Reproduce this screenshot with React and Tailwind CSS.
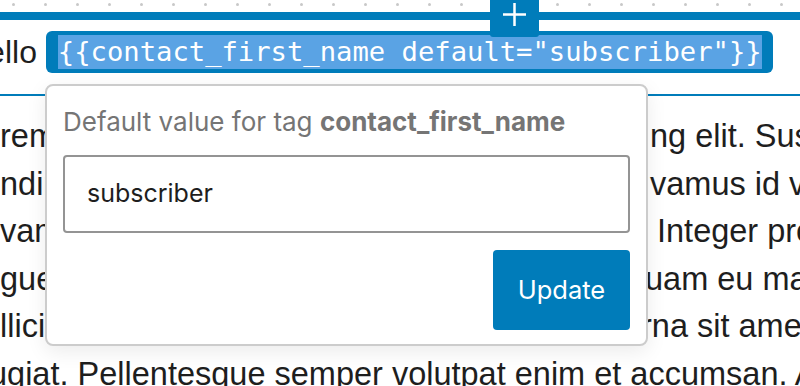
import React from "react";

const SANS = { fontFamily: '"Liberation Sans", Arial, sans-serif' };

const rows = [
  { left: "rem ipsum dolor sit amet", right: "ng elit. Suspendisse", rml: "ml-[0px]" },
  { left: "ndimentum lorem", right: "vamus id vel", rml: "ml-[0px]" },
  { left: "vamus lorem", right: "Integer pretium", rml: "ml-[7px]" },
  { left: "gue lorem", right: "uam eu magna", rml: "-ml-[5px]" },
  { left: "llicitudin lorem", right: "rna sit amet,", rml: "-ml-[9px]" },
];

export default function App() {
  const dots = Array.from({ length: 25 });
  return (
    <div
      className="relative w-[800px] h-[386px] overflow-hidden bg-white text-[#1e1e1e]"
      style={SANS}
    >
      {/* dotted guide */}
      <div className="flex h-[12px] gap-[29px] pl-[12px] pt-[3px]">
        {dots.map((_, i) => (
          <span key={i} className="block h-[3px] w-[3px] shrink-0 rounded-full bg-[#c8c8c8]" />
        ))}
      </div>
      {/* blue band */}
      <div className="h-[8px] bg-[#007cba]" />

      {/* Hello row */}
      <div className="mt-[11px] flex h-[42px] items-center whitespace-nowrap">
        <span className="-ml-[36px] text-[32px] leading-[42px]">Hello&nbsp;</span>
        <span className="rounded-[6px] bg-[#007cba] py-[4px] pl-[12px] pr-[11px]">
          <span
            className="block bg-[#5aa3e4] text-[27.2px] leading-[34px] text-white"
            style={{ fontFamily: '"DejaVu Sans Mono", monospace' }}
          >
            {'{{contact_first_name default="subscriber"}}'}
          </span>
        </span>
      </div>

      {/* block border */}
      <div className="mt-[21px] h-[2px] bg-[#007cba]" />

      {/* paragraph */}
      <div className="pt-[17px] text-[32.5px] leading-[47.5px]">
        {rows.map((r, i) => (
          <div key={i} className="flex whitespace-nowrap">
            <div className="w-[650px] shrink-0 overflow-hidden">{r.left}</div>
            <div className={r.rml}>{r.right}</div>
          </div>
        ))}
        <div className="-ml-[11px] whitespace-nowrap">
          ugiat. Pellentesque semper volutpat enim et accumsan. Aliquam
        </div>
      </div>

      {/* inserter plus button */}
      <div className="absolute left-[490px] top-0 flex h-[37px] w-[49px] justify-center rounded-b-[3px] bg-[#007cba] pt-[3px]">
        <svg width="23" height="23" viewBox="0 0 23 23" fill="none">
          <path d="M11.5 0v23M0 11.5h23" stroke="white" strokeWidth="2.5" />
        </svg>
      </div>

      {/* popover */}
      <div
        className="absolute left-[45px] top-[84px] flex h-[262px] w-[603px] flex-col rounded-[8px] border-2 border-[#cccccc] bg-white px-[16px] pt-[20px] shadow-[0_6px_20px_rgba(0,0,0,0.08)]"
        style={{ fontFamily: 'Inter, "Liberation Sans", sans-serif' }}
      >
        <div className="h-[32px] whitespace-nowrap text-[26px] leading-[32px] text-[#757575]">
          Default value for tag <span className="font-bold">contact_first_name</span>
        </div>
        <div className="mt-[17px] flex h-[78px] w-[567px] items-center rounded-[4px] border-2 border-[#949494] pl-[22px] text-[25px] text-[#1e1e1e]">
          subscriber
        </div>
        <div className="mt-[17px] flex justify-end">
          <div className="flex h-[80px] w-[137px] items-center justify-center rounded-[4px] bg-[#007cba] text-[25.5px] text-white">
            Update
          </div>
        </div>
      </div>
    </div>
  );
}
